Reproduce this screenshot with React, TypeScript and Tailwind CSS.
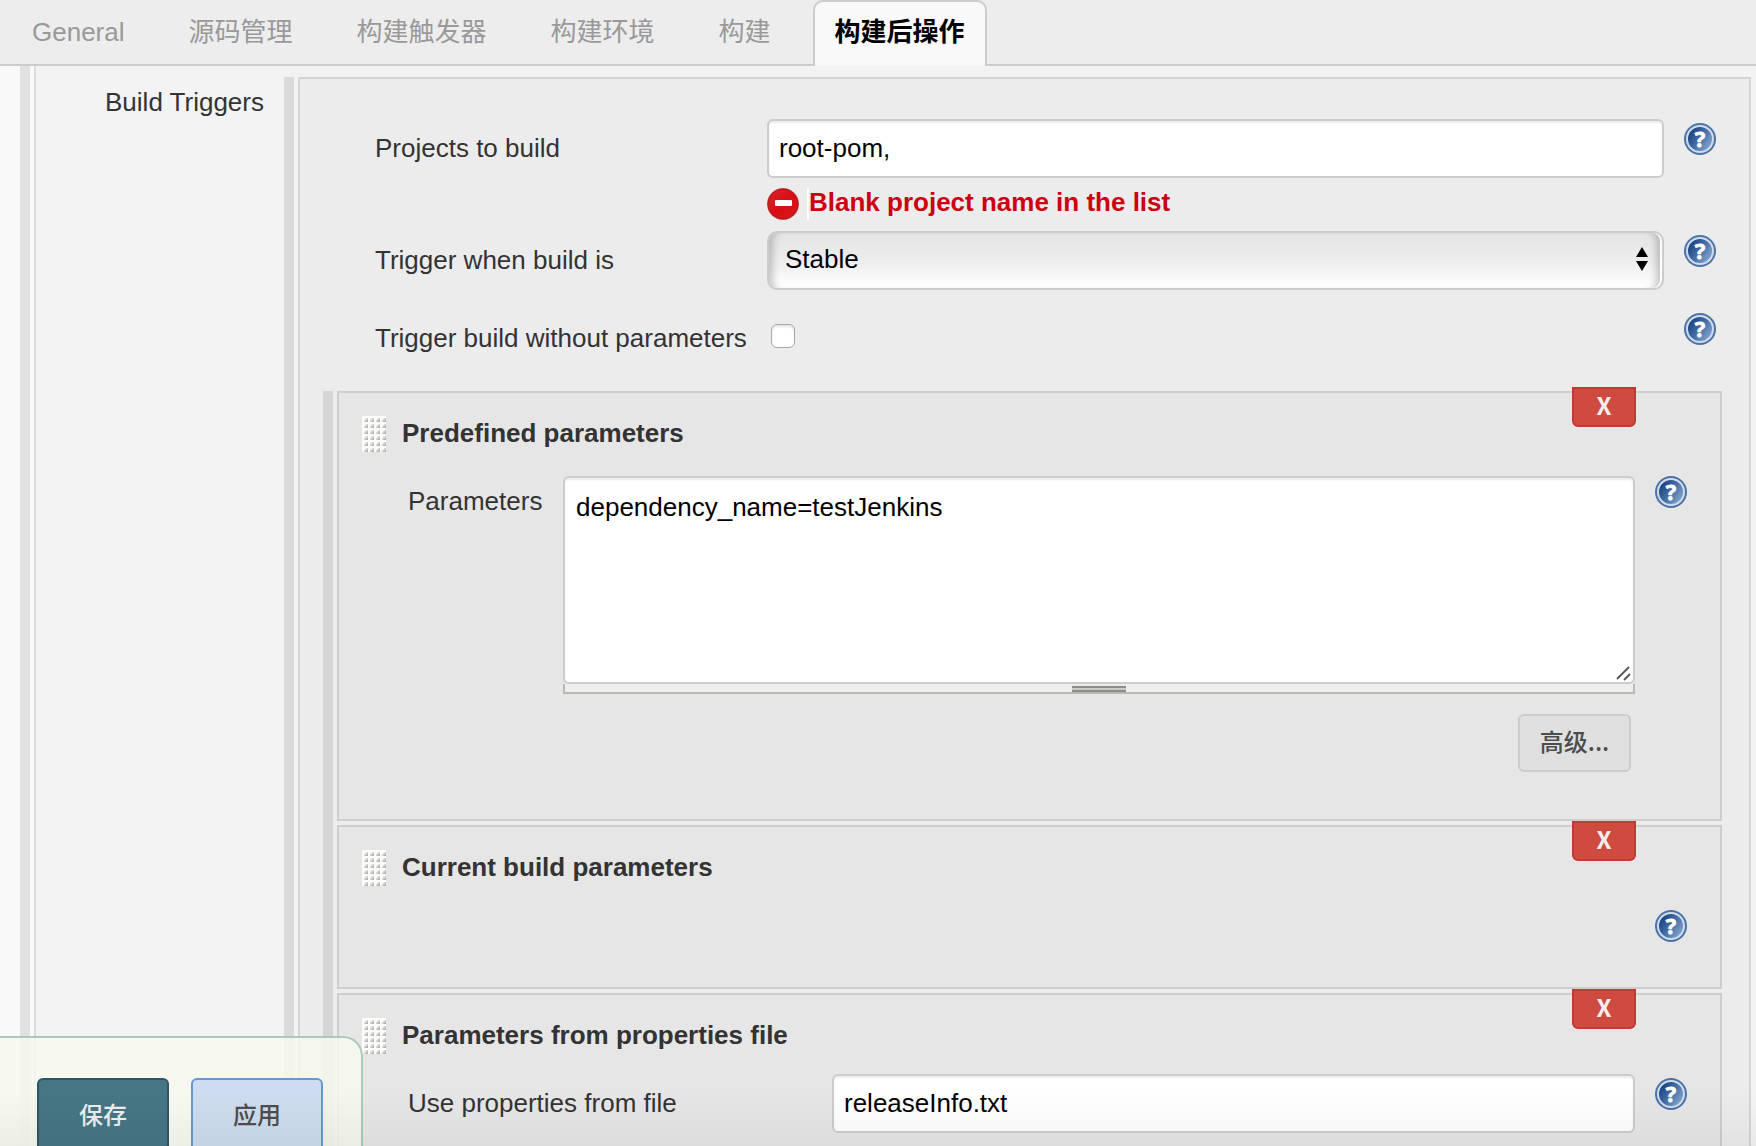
import { useState } from "react";
import type { ReactNode } from "react";

const TABS = ["General", "源码管理", "构建触发器", "构建环境", "构建", "构建后操作"];

const inputClass =
  "block h-[59px] w-full rounded-md border-2 border-[#ccc] bg-white px-2.5 text-black shadow-[inset_0_2px_2px_rgba(0,0,0,0.08)] outline-none";

// Gradients shared by all the small icons on the page
function IconDefs() {
  return (
    <svg className="absolute h-0 w-0" aria-hidden="true">
      <defs>
        <linearGradient id="help-fill" x1="0" y1="0.2" x2="1" y2="0.9">
          <stop offset="0.1" stopColor="#1d4583" />
          <stop offset="0.5" stopColor="#4a71a8" />
          <stop offset="1" stopColor="#8fb4dc" />
        </linearGradient>
        <linearGradient id="error-fill" x1="0" y1="0" x2="1" y2="1">
          <stop offset="0" stopColor="#d8282b" />
          <stop offset="0.5" stopColor="#da0d14" />
          <stop offset="1" stopColor="#d31a1f" />
        </linearGradient>
        <linearGradient id="grip-dot" x1="0" y1="0" x2="1" y2="1">
          <stop offset="0.2" stopColor="#f0f0ee" />
          <stop offset="1" stopColor="#a0a09c" />
        </linearGradient>
        <pattern id="grip-pattern" width="6" height="6" patternUnits="userSpaceOnUse">
          <rect width="6" height="6" fill="#fcfcfa" />
          <path d="M2 6V4L4 2H6V6Z" fill="url(#grip-dot)" />
        </pattern>
      </defs>
    </svg>
  );
}

function HelpButton({ className = "" }: { className?: string }) {
  return (
    <button type="button" aria-label="Help" className={`size-8 shrink-0 self-start ${className}`}>
      <svg viewBox="0 0 32 32" className="size-8">
        <circle cx="16" cy="16" r="16" fill="#4d72a8" />
        <circle cx="16" cy="16" r="13" fill="url(#help-fill)" stroke="#cfdcec" strokeWidth="2" />
        <text
          x="16"
          y="24"
          textAnchor="middle"
          fontFamily="'Open Sans', sans-serif"
          fontWeight="700"
          fontSize="22"
          fill="#fff"
          stroke="#fff"
          strokeWidth="0.8"
        >
          ?
        </text>
      </svg>
    </button>
  );
}

function ErrorIcon() {
  return (
    <svg viewBox="0 0 32 32" className="size-8 shrink-0">
      <circle cx="16" cy="16" r="16" fill="#c9575a" />
      <circle cx="16" cy="16" r="15" fill="url(#error-fill)" stroke="#b5161a" />
      <rect x="8" y="12" width="17" height="6" rx="1" fill="#fff" />
    </svg>
  );
}

function DragHandle() {
  return (
    <svg width="24" height="36" className="shrink-0 cursor-move">
      <rect width="24" height="36" fill="url(#grip-pattern)" />
    </svg>
  );
}

function ParameterBlock({ title, children }: { title: string; children: ReactNode }) {
  return (
    <section className="relative border-2 border-[#cecece] bg-[#e6e6e6] pt-[23px] pr-[33px] pl-[23px]">
      <button
        type="button"
        className="absolute -top-1.5 right-[84px] h-10 w-16 rounded-b-md border-2 border-[#bf3a30] bg-[#d04b3f] pb-1 font-['Noto_Sans_CJK_SC',sans-serif] text-2xl leading-8 font-bold text-[#f0eeee]"
      >
        X
      </button>
      <div className="flex h-9 gap-4">
        <DragHandle />
        <h3 className="leading-[34px] font-bold">{title}</h3>
      </div>
      {children}
    </section>
  );
}

export default function App() {
  const [activeTab, setActiveTab] = useState("构建后操作");
  const [projects, setProjects] = useState("root-pom,");
  const [threshold, setThreshold] = useState("Stable");
  const [withoutParams, setWithoutParams] = useState(false);
  const [parameters, setParameters] = useState("dependency_name=testJenkins");
  const [propsFile, setPropsFile] = useState("releaseInfo.txt");

  return (
    <div className="relative flex h-screen flex-col overflow-hidden bg-[#f9f9f9] font-['Liberation_Sans','Noto_Sans_CJK_SC',sans-serif] text-[26px] leading-8 text-[#333]">
      <IconDefs />

      {/* Tab bar */}
      <nav className="flex h-[66px] shrink-0 gap-5 border-b-2 border-[#ccc] bg-[#ededed] pl-2.5">
        {TABS.map((tab) => (
          <button
            key={tab}
            type="button"
            onClick={() => setActiveTab(tab)}
            className={`h-[66px] shrink-0 rounded-t-[10px] border-2 border-b-0 px-5 pb-1 whitespace-nowrap ${
              tab === activeTab
                ? "border-[#ccc] bg-[#f9f9f9] font-bold text-black"
                : "border-transparent text-[#999]"
            }`}
          >
            {tab}
          </button>
        ))}
      </nav>

      {/* Scrolling form */}
      <main className="flex min-h-0 flex-1 overflow-y-auto pl-5 [scrollbar-width:none]">
        <div className="flex h-max min-w-0 flex-1 gap-1">
          <div className="w-2.5 shrink-0 bg-[#e1e1e1]" />
          <div className="flex min-w-0 flex-1 border-l-2 border-[#dbdbdb] bg-[#f3f3f3] pt-[11px] pr-[5px]">
            <h2 className="w-[248px] shrink-0 pt-[9px] pr-5 text-right">Build Triggers</h2>
            <div className="mr-1 w-2.5 shrink-0 bg-[#dadada]" />

            <div className="min-w-0 flex-1 border-2 border-[#d5d5d5] bg-[#ececec] pb-10">
              <div className="pt-10 pr-[33px] pl-[75px]">
                <div className="flex items-center">
                  <label htmlFor="projects" className="w-[392px] shrink-0 pb-0.5">
                    Projects to build
                  </label>
                  <input
                    id="projects"
                    type="text"
                    value={projects}
                    onChange={(e) => setProjects(e.target.value)}
                    className={`${inputClass} mr-5 min-w-0 flex-1`}
                  />
                  <HelpButton className="mt-1" />
                </div>

                <div className="mt-2.5 ml-[392px] flex gap-2">
                  <ErrorIcon />
                  <p className="border-l-2 border-white leading-7 font-bold text-[#cc0010]">
                    Blank project name in the list
                  </p>
                </div>

                <div className="mt-[11px] flex items-center">
                  <label htmlFor="threshold" className="w-[392px] shrink-0 pb-0.5">
                    Trigger when build is
                  </label>
                  <div className="relative mr-5 min-w-0 flex-1">
                    <select
                      id="threshold"
                      value={threshold}
                      onChange={(e) => setThreshold(e.target.value)}
                      className="block h-[59px] w-full appearance-none rounded-[10px] border-2 border-[#ccc] bg-linear-to-b from-[#e4e4e4] via-[#ededed] to-white px-4 pb-1 text-black shadow-[inset_-2px_0_0_#fff,inset_9px_0_7px_-5px_rgba(0,0,0,0.2),inset_-11px_0_7px_-5px_rgba(0,0,0,0.2)] outline-none"
                    >
                      <option>Stable</option>
                      <option>Unstable</option>
                      <option>Failed</option>
                    </select>
                    <svg
                      viewBox="0 0 12 24"
                      className="pointer-events-none absolute top-4 right-4 h-6 w-3"
                    >
                      <path d="M6 0L12 10H0ZM6 24L12 14H0Z" fill="#000" />
                    </svg>
                  </div>
                  <HelpButton className="mt-1" />
                </div>

                <div className="mt-[19px] flex h-[59px] items-center">
                  <label htmlFor="without-params" className="w-[392px] shrink-0 pb-0.5">
                    Trigger build without parameters
                  </label>
                  <div className="flex flex-1 pb-1.5 pl-1">
                    <input
                      id="without-params"
                      type="checkbox"
                      checked={withoutParams}
                      onChange={(e) => setWithoutParams(e.target.checked)}
                      className="size-6 appearance-none rounded-md border border-[#a8a8a8] bg-white shadow-[inset_0_2px_2px_rgba(0,0,0,0.1)] checked:bg-[#4b758b]"
                    />
                  </div>
                  <HelpButton className="mt-1" />
                </div>
              </div>

              {/* Parameter factories */}
              <div className="mt-[23px] flex gap-1 pr-[27px] pl-[23px]">
                <div className="w-2.5 shrink-0 bg-[#d5d5d5]" />
                <div className="flex min-w-0 flex-1 flex-col gap-1">
                  <ParameterBlock title="Predefined parameters">
                    <div className="mt-6 flex pl-[46px]">
                      <label htmlFor="parameters" className="w-[155px] shrink-0 pt-[9px]">
                        Parameters
                      </label>
                      <div className="relative mr-5 min-w-0 flex-1">
                        <textarea
                          id="parameters"
                          value={parameters}
                          onChange={(e) => setParameters(e.target.value)}
                          className="block h-52 w-full resize-none rounded-md border-2 border-[#ccc] bg-white px-[11px] py-[13px] text-black shadow-[inset_0_2px_2px_rgba(0,0,0,0.08)] outline-none"
                        />
                        <svg
                          viewBox="0 0 16 16"
                          className="pointer-events-none absolute right-1 bottom-3 size-4"
                        >
                          <path
                            d="M2 13L14 1M9 14L15 8"
                            stroke="#555"
                            strokeWidth="1.8"
                            fill="none"
                          />
                        </svg>
                        <div className="flex h-2.5 cursor-row-resize items-end justify-center border-2 border-t-0 border-[#b9b9b3] bg-[#eeeeec]">
                          <div className="h-1.5 w-[54px] border-y-2 border-[#8c8c88] bg-[#ccccc6]" />
                        </div>
                      </div>
                      <HelpButton />
                    </div>
                    <div className="mt-5 flex justify-end pr-14 pb-[47px]">
                      <button
                        type="button"
                        className="h-[58px] w-[113px] rounded-md border-2 border-[#ccc] bg-[#e0e0e0] pb-1 font-['Noto_Sans_CJK_SC',sans-serif] text-2xl font-medium text-[#4d4d4d]"
                      >
                        高级...
                      </button>
                    </div>
                  </ParameterBlock>

                  <ParameterBlock title="Current build parameters">
                    <div className="mt-5 flex justify-end pb-[45px]">
                      <HelpButton className="mt-1" />
                    </div>
                  </ParameterBlock>

                  <ParameterBlock title="Parameters from properties file">
                    <div className="mt-5 flex items-center pb-20 pl-[46px]">
                      <label htmlFor="props-file" className="w-[424px] shrink-0 pb-0.5">
                        Use properties from file
                      </label>
                      <input
                        id="props-file"
                        type="text"
                        value={propsFile}
                        onChange={(e) => setPropsFile(e.target.value)}
                        className={`${inputClass} mr-5 min-w-0 flex-1`}
                      />
                      <HelpButton className="mt-1" />
                    </div>
                  </ParameterBlock>
                </div>
              </div>
            </div>
          </div>
        </div>
      </main>

      {/* Save / apply bar stuck to the bottom left */}
      <div className="absolute bottom-0 left-0 flex h-[110px] gap-[22px] overflow-hidden rounded-tr-[20px] border-t-2 border-r-2 border-[#a9cbb9] bg-[#f7f9ee]/85 pt-10 pr-[38px] pl-[37px]">
        <button
          type="button"
          className="h-[76px] w-[132px] rounded-md border-2 border-[#2f5464] bg-[#467584] text-2xl font-medium text-[#eee]"
        >
          保存
        </button>
        <button
          type="button"
          className="h-[76px] w-[132px] rounded-md border-2 border-[#6499d0] bg-[#cddcee] text-2xl font-medium text-[#4d4d4d]"
        >
          应用
        </button>
      </div>
      <div className="pointer-events-none absolute inset-x-0 bottom-0 h-14 bg-linear-to-t from-black/4 to-transparent" />
    </div>
  );
}
